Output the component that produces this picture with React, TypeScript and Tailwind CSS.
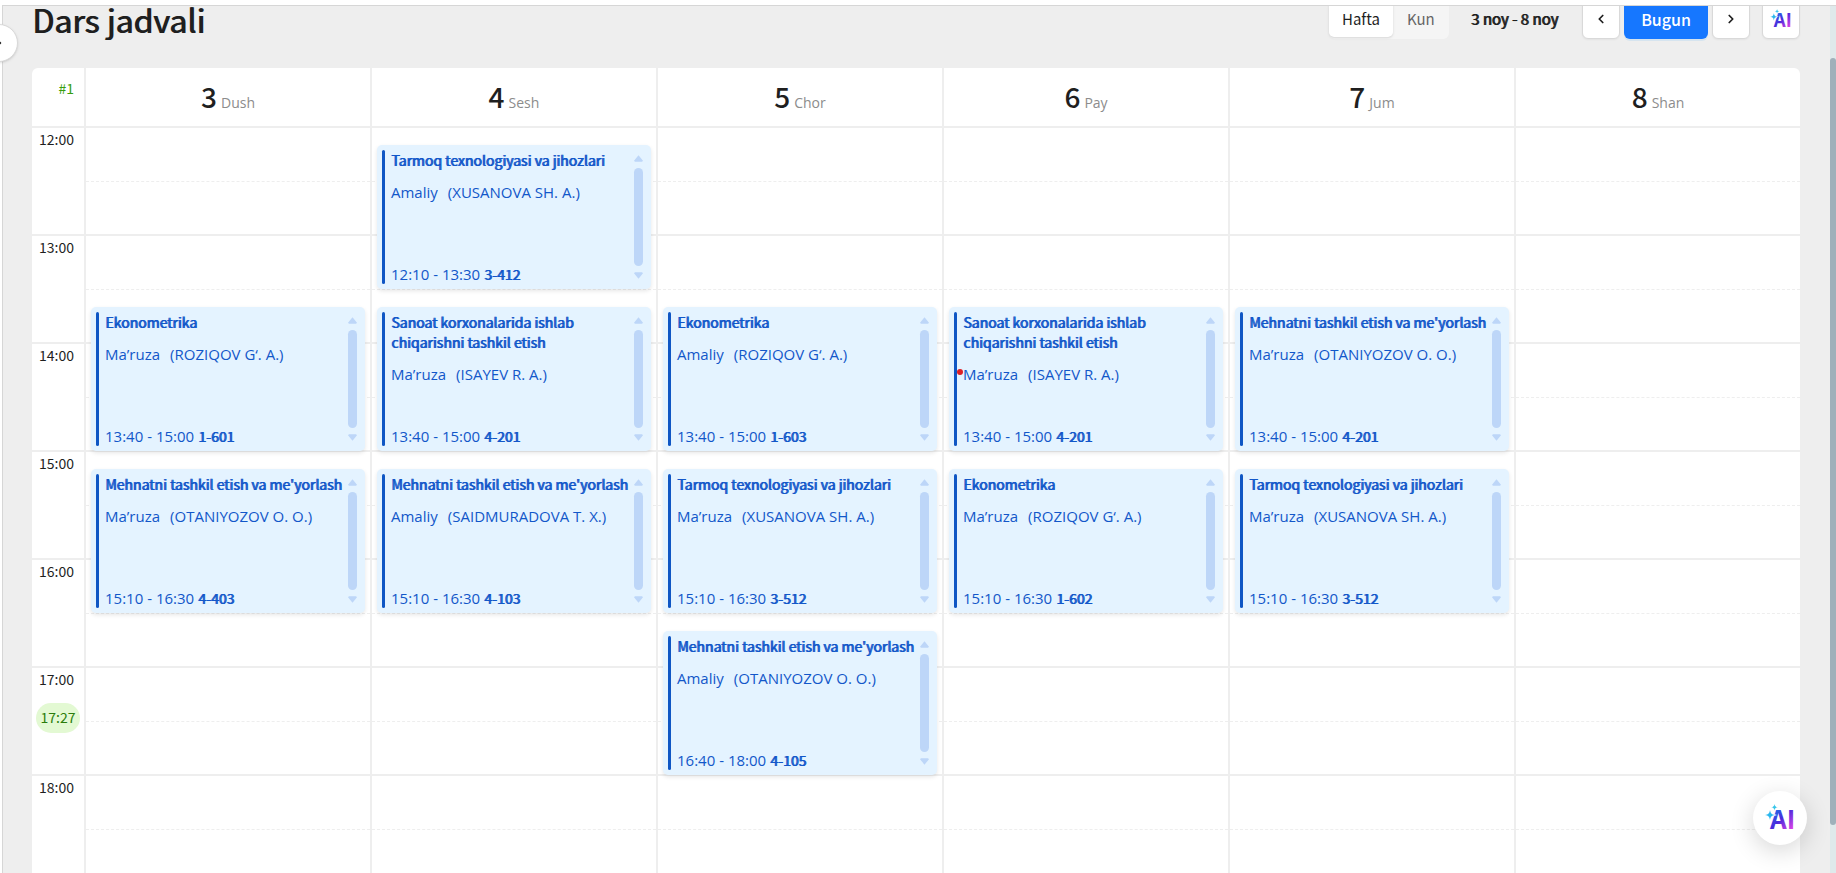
import { useState } from "react";
import { ChevronLeft, ChevronRight } from "lucide-react";

type Lesson = {
  title: string;
  kind: string;
  teacher: string;
  start: string;
  end: string;
  room: string;
  marked?: boolean;
};

type Day = {
  num: number;
  name: string;
  lessons: Lesson[];
};

const days: Day[] = [
  {
    num: 3,
    name: "Dush",
    lessons: [
      { title: "Ekonometrika", kind: "Ma’ruza", teacher: "ROZIQOV G‘. A.", start: "13:40", end: "15:00", room: "1-601" },
      { title: "Mehnatni tashkil etish va me'yorlash", kind: "Ma’ruza", teacher: "OTANIYOZOV O. O.", start: "15:10", end: "16:30", room: "4-403" },
    ],
  },
  {
    num: 4,
    name: "Sesh",
    lessons: [
      { title: "Tarmoq texnologiyasi va jihozlari", kind: "Amaliy", teacher: "XUSANOVA SH. A.", start: "12:10", end: "13:30", room: "3-412" },
      { title: "Sanoat korxonalarida ishlab chiqarishni tashkil etish", kind: "Ma’ruza", teacher: "ISAYEV R. A.", start: "13:40", end: "15:00", room: "4-201" },
      { title: "Mehnatni tashkil etish va me'yorlash", kind: "Amaliy", teacher: "SAIDMURADOVA T. X.", start: "15:10", end: "16:30", room: "4-103" },
    ],
  },
  {
    num: 5,
    name: "Chor",
    lessons: [
      { title: "Ekonometrika", kind: "Amaliy", teacher: "ROZIQOV G‘. A.", start: "13:40", end: "15:00", room: "1-603" },
      { title: "Tarmoq texnologiyasi va jihozlari", kind: "Ma’ruza", teacher: "XUSANOVA SH. A.", start: "15:10", end: "16:30", room: "3-512" },
      { title: "Mehnatni tashkil etish va me'yorlash", kind: "Amaliy", teacher: "OTANIYOZOV O. O.", start: "16:40", end: "18:00", room: "4-105" },
    ],
  },
  {
    num: 6,
    name: "Pay",
    lessons: [
      { title: "Sanoat korxonalarida ishlab chiqarishni tashkil etish", kind: "Ma’ruza", teacher: "ISAYEV R. A.", start: "13:40", end: "15:00", room: "4-201", marked: true },
      { title: "Ekonometrika", kind: "Ma’ruza", teacher: "ROZIQOV G‘. A.", start: "15:10", end: "16:30", room: "1-602" },
    ],
  },
  {
    num: 7,
    name: "Jum",
    lessons: [
      { title: "Mehnatni tashkil etish va me'yorlash", kind: "Ma’ruza", teacher: "OTANIYOZOV O. O.", start: "13:40", end: "15:00", room: "4-201" },
      { title: "Tarmoq texnologiyasi va jihozlari", kind: "Ma’ruza", teacher: "XUSANOVA SH. A.", start: "15:10", end: "16:30", room: "3-512" },
    ],
  },
  { num: 8, name: "Shan", lessons: [] },
];

const hours = ["12:00", "13:00", "14:00", "15:00", "16:00", "17:00", "18:00"];

// one grid row is ten minutes, the first row starts at 12:00
function rowLine(time: string) {
  const [h, m] = time.split(":").map(Number);
  return ((h - 12) * 60 + m) / 10 + 1;
}

function AiLogo({ id, className }: { id: string; className: string }) {
  return (
    <svg viewBox="0 0 28 28" className={`overflow-visible ${className}`} aria-label="AI" role="img">
      <defs>
        <linearGradient id={id} gradientUnits="userSpaceOnUse" x1="6" y1="4" x2="28" y2="26">
          <stop offset="0.1" stopColor="#1f6fe8" />
          <stop offset="0.45" stopColor="#4a2bdc" />
          <stop offset="1" stopColor="#ee45e6" />
        </linearGradient>
      </defs>
      <text
        x="4"
        y="25"
        fontSize="26"
        fontWeight="700"
        fill={`url(#${id})`}
        className="font-['Noto_Sans_CJK_SC',sans-serif]"
      >
        AI
      </text>
      <path d="M5 4c1 5 2 6 6 7-4 1-5 2-6 8-1-6-2-7-5-8 3-1 4-2 5-7z" fill="#fff" />
      <path d="M4 6c.6 3.400 1.400 4.300 5 5-3.600.7-4.400 1.600-5 5-.6-3.400-1.400-4.300-5-5 3.600-.7 4.400-1.600 5-5z" fill="#2bb7ee" />
      <path d="M8.500 0c.4 2.300 1 2.900 3.300 3.300-2.300.4-2.900 1-3.300 3.300-.4-2.300-1-2.900-3.300-3.300 2.300-.4 2.900-1 3.300-3.300z" fill="#38c6ea" />
    </svg>
  );
}

function LessonCard({ lesson }: { lesson: Lesson }) {
  return (
    <article
      className="relative mx-[5px] flex rounded-[5px] bg-[#e4f3ff] p-[5px] text-[#1257c9] shadow-[0_2px_4px_rgba(0,0,0,0.1)]"
      style={{ gridRow: `${rowLine(lesson.start)} / ${rowLine(lesson.end)}` }}
    >
      <div className="w-[3px] shrink-0 rounded-full bg-[#0f56c4]" />
      <div className="flex min-w-0 flex-1 flex-col pl-[6px]">
        <h3 className="-mr-1 text-[14px] leading-5 [text-shadow:1px_0_0_currentColor]">{lesson.title}</h3>
        <p className="mt-3 font-['Open_Sans',sans-serif] text-[15px] leading-5 whitespace-nowrap">
          {lesson.kind}
          <span className="ml-[10px]">({lesson.teacher})</span>
        </p>
        <p className="mt-auto font-['Open_Sans',sans-serif] text-[15px] leading-5">
          {lesson.start} - {lesson.end}{" "}
          <b className="font-['Noto_Sans_CJK_SC',sans-serif] text-[14px] font-normal [text-shadow:1px_0_0_currentColor]">{lesson.room}</b>
        </p>
      </div>
      <div className="mr-[3px] flex w-[9px] shrink-0 flex-col items-center gap-[6px] py-[5px]">
        <svg viewBox="0 0 10 7" className="h-[7px] w-[9px] shrink-0" fill="#bdd6f8">
          <path d="M5 0 10 6 9 7H1L0 6z" />
        </svg>
        <div className="w-full flex-1 rounded-full bg-[#bdd6f8]" />
        <svg viewBox="0 0 10 7" className="h-[7px] w-[9px] shrink-0" fill="#bdd6f8">
          <path d="M5 7 0 1 1 0H9L10 1z" />
        </svg>
      </div>
      {lesson.marked && (
        <span className="absolute top-[62px] left-[8px] size-[6px] rounded-full bg-[#dc1f26]" />
      )}
    </article>
  );
}

export default function App() {
  const [view, setView] = useState<"Hafta" | "Kun">("Hafta");

  return (
    <div className="relative flex h-screen flex-col overflow-hidden bg-white font-['Noto_Sans_CJK_SC',sans-serif] text-[#1f1f1f]">
      <div className="h-[5px] shrink-0" />
      <div className="flex min-h-0 flex-1">
        <div className="w-[2px] shrink-0" />
        <div className="flex min-w-0 flex-1 border-t border-l border-[#d6d6d6] bg-[#eeeeee]">
          <main className="min-w-0 flex-1 overflow-hidden pr-[30px] pl-[29px]">
            <header className="-mt-[7px] flex h-10 items-center">
              <h1 className="flex-1 text-[32px] leading-10 [text-shadow:1px_0_0_currentColor]">Dars jadvali</h1>
              <div className="flex h-10 items-start rounded-md bg-[#f5f5f5] pt-[2px]">
                {(["Hafta", "Kun"] as const).map((v) => (
                  <button
                    key={v}
                    onClick={() => setView(v)}
                    className={
                      v === view
                        ? "h-9 rounded-[5px] bg-white px-[13px] text-[15px] shadow-sm"
                        : "h-9 px-[14px] text-[15px] text-[#666666]"
                    }
                  >
                    {v}
                  </button>
                ))}
              </div>
              <span className="ml-[22px] text-[15px] [text-shadow:1px_0_0_currentColor]">3 noy - 8 noy</span>
              <div className="ml-6 flex h-10 gap-1">
                <button aria-label="Oldingi hafta" className="flex w-[38px] items-center justify-center rounded-md border border-[#d9d9d9] bg-white shadow-xs">
                  <ChevronLeft size={14} strokeWidth={3} />
                </button>
                <button className="w-[84px] rounded-md bg-[#1677ff] text-[16px] font-medium text-white shadow-[0_2px_0_rgba(5,145,255,0.1)]">
                  Bugun
                </button>
                <button aria-label="Keyingi hafta" className="flex w-[38px] items-center justify-center rounded-md border border-[#d9d9d9] bg-white shadow-xs">
                  <ChevronRight size={14} strokeWidth={3} />
                </button>
              </div>
              <button aria-label="AI yordamchi" className="ml-3 flex h-10 w-[38px] items-center justify-center rounded-md border border-[#d9d9d9] bg-white shadow-xs">
                <AiLogo id="ai-small" className="size-5" />
              </button>
            </header>

            <section className="mt-[29px] overflow-hidden rounded-t-md bg-white">
              <div className="flex h-[58px]">
                <div className="w-[52px] shrink-0 pt-[10px] pr-[10px] text-right text-[14px] leading-5 text-[#389e0d]">#1</div>
                <div className="grid flex-1 grid-cols-6">
                  {days.map((day) => (
                    <div key={day.num} className="flex items-baseline justify-center gap-1 border-l-2 border-[#eeeeee] pt-2">
                      <span className="text-[28px] leading-10 font-medium">{day.num}</span>
                      <span className="font-['Open_Sans',sans-serif] text-[14px] text-[#8c8c8c]">{day.name}</span>
                    </div>
                  ))}
                </div>
              </div>

              <div className="flex">
                <div className="relative w-[52px] shrink-0">
                  {hours.map((hour) => (
                    <div key={hour} className="h-[108px] border-t-2 border-[#eeeeee] pt-px pr-[10px] text-right text-[14px] leading-5">
                      {hour}
                    </div>
                  ))}
                  <div className="absolute top-[577px] left-1 h-[30px] w-11 rounded-full bg-[#e3f9d3] text-center text-[14px] leading-7 text-[#2b7d0b]">
                    17:27
                  </div>
                </div>
                <div className="grid flex-1 grid-cols-6">
                  {days.map((day) => (
                    <div key={day.num} className="grid border-l-2 border-[#eeeeee]">
                      <div className="col-start-1 row-start-1">
                        {hours.map((hour) => (
                          <div key={hour} className="h-[108px] border-t-2 border-[#eeeeee] pt-[53px]">
                            <div className="border-t border-dashed border-[#eeeeee]" />
                          </div>
                        ))}
                      </div>
                      <div className="col-start-1 row-start-1 grid auto-rows-[18px] pt-px">
                        {day.lessons.map((lesson) => (
                          <LessonCard key={lesson.start} lesson={lesson} />
                        ))}
                      </div>
                    </div>
                  ))}
                </div>
              </div>
            </section>
          </main>

          <div className="flex w-[6px] shrink-0 flex-col bg-[#dfe9eb] pt-[52px] pb-[48px]">
            <div className="flex-1 rounded-full bg-[#9fb0ba]" />
          </div>
        </div>
      </div>

      <button
        aria-label="Menyuni ochish"
        className="absolute top-6 -left-5 flex size-[38px] items-center justify-center rounded-full border border-[#d9d9d9] bg-white shadow-sm"
      >
        <ChevronRight size={12} strokeWidth={3} />
      </button>
      <button
        aria-label="AI chat"
        className="absolute right-[29px] bottom-7 flex size-[54px] items-center justify-center rounded-full bg-white shadow-[0_6px_24px_rgba(0,0,0,0.16)]"
      >
        <AiLogo id="ai-large" className="size-7" />
      </button>
    </div>
  );
}
